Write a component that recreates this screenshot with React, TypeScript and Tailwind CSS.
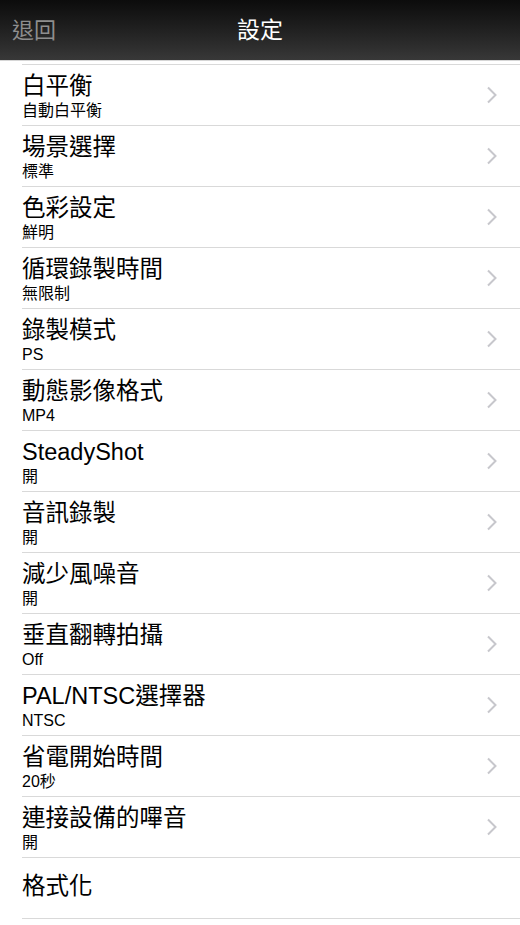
import React from "react";

const rows: { title: string; value?: string }[] = [
  { title: "白平衡", value: "自動白平衡" },
  { title: "場景選擇", value: "標準" },
  { title: "色彩設定", value: "鮮明" },
  { title: "循環錄製時間", value: "無限制" },
  { title: "錄製模式", value: "PS" },
  { title: "動態影像格式", value: "MP4" },
  { title: "SteadyShot", value: "開" },
  { title: "音訊錄製", value: "開" },
  { title: "減少風噪音", value: "開" },
  { title: "垂直翻轉拍攝", value: "Off" },
  { title: "PAL/NTSC選擇器", value: "NTSC" },
  { title: "省電開始時間", value: "20秒" },
  { title: "連接設備的嗶音", value: "開" },
  { title: "格式化" },
];

function Chevron() {
  return (
    <svg width="12" height="18" viewBox="0 0 12 18" className="shrink-0">
      <path d="M2 1.5 L9.5 9 L2 16.5" fill="none" stroke="#c7c7cc" strokeWidth="2" />
    </svg>
  );
}

export default function App() {
  return (
    <div
      className="w-[520px] h-[925px] bg-white overflow-hidden"
      style={{ fontFamily: '"Liberation Sans", "Noto Sans CJK TC", sans-serif' }}
    >
      <div className="relative h-[61px] bg-gradient-to-b from-[#0c0c0c] to-[#383838] flex items-center border-b border-[#d6d6d6]">
        <span className="pl-[12px] text-[22px] text-[#8e8e8e]">退回</span>
        <span className="absolute left-0 right-0 text-center text-[23px] text-white pointer-events-none">設定</span>
      </div>

      <div className="pt-[3px] pl-[22px]">
        <div className="border-t border-[#d9d9d9]">
          {rows.map((r) => (
            <div
              key={r.title}
              className="h-[61px] border-b border-[#d9d9d9] flex items-center pr-[22px]"
            >
              {r.value ? (
                <>
                  <div className="flex-1 flex flex-col self-start pt-[8px]">
                    <span className="text-[23.5px] leading-[26px] text-black">{r.title}</span>
                    <span className="mt-[3px] text-[16px] leading-[18px] text-black">{r.value}</span>
                  </div>
                  <Chevron />
                </>
              ) : (
                <span className="flex-1 text-[23.5px] leading-[26px] text-black -mt-[5px]">{r.title}</span>
              )}
            </div>
          ))}
        </div>
      </div>
    </div>
  );
}
